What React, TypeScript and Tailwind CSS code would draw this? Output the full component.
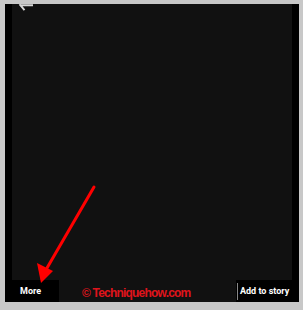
export default function App() {
  return (
    <div className="relative w-[303px] h-[310px] bg-[#c8c8c8] pt-[4px] pl-[5px] pr-[4px] pb-[8px] overflow-hidden">
      <div className="flex flex-col w-full h-full">
        {/* screen */}
        <div className="flex h-[276px]">
          <div className="w-[7px] bg-black" />
          <div className="relative w-[280px] bg-[#111111] overflow-hidden">
            <svg className="absolute left-0 top-0" width="24" height="10" viewBox="0 0 24 10">
              <path d="M21 1.2H8.5M7.5 0.2L12.5 6.2" stroke="#d8d8d8" strokeWidth="2" fill="none" />
            </svg>
          </div>
          <div className="w-[7px] bg-black" />
        </div>

        {/* bottom bar */}
        <div className="flex h-[22px]">
          <div className="w-[54px] bg-black flex items-center pl-[15px] pt-[1px]">
            <span className="text-white text-[9px] font-bold font-['Roboto',sans-serif] leading-none">More</span>
          </div>
          <div className="w-[177px] bg-[#111111] flex items-center pl-[23px] pt-[4px]">
            <span className="text-[#e0141c] text-[12px] font-bold tracking-[-0.8px] font-['Liberation_Sans',sans-serif] leading-none whitespace-nowrap">
              © Techniquehow.com
            </span>
          </div>
          <div className="flex-1 bg-black flex items-center gap-[2px] pl-[1px]">
            <div className="w-[1px] h-[17px] bg-[#888]" />
            <span className="text-white text-[9px] font-bold font-['Roboto',sans-serif] leading-none whitespace-nowrap">
              Add to story
            </span>
          </div>
        </div>
      </div>

      {/* annotation arrow */}
      <svg className="absolute left-0 top-0 pointer-events-none" width="303" height="310" viewBox="0 0 303 310">
        <line x1="94" y1="187" x2="47" y2="268" stroke="#ff0000" strokeWidth="3" strokeLinecap="round" />
        <polygon points="41,283 37,263 53,271" fill="#ff0000" />
      </svg>
    </div>
  )
}
